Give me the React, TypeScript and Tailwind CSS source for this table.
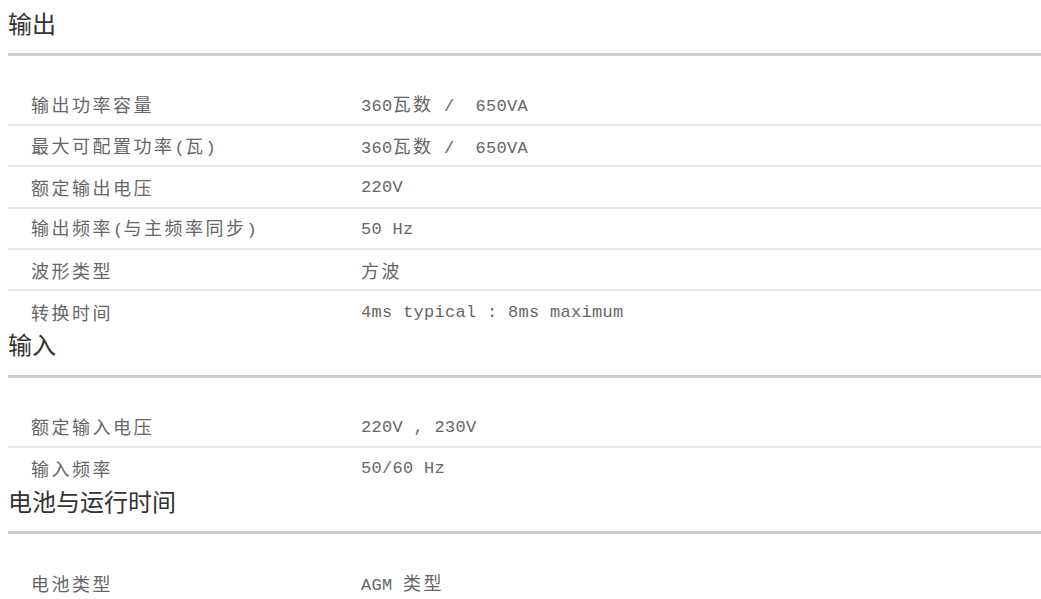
import React from "react"

type Row = { label: string; value: string }
type Section = { title: string; rows: Row[] }

const sections: Section[] = [
  {
    title: "输出",
    rows: [
      { label: "输出功率容量", value: "360瓦数 /  650VA" },
      { label: "最大可配置功率(瓦)", value: "360瓦数 /  650VA" },
      { label: "额定输出电压", value: "220V" },
      { label: "输出频率(与主频率同步)", value: "50 Hz" },
      { label: "波形类型", value: "方波" },
      { label: "转换时间", value: "4ms typical : 8ms maximum" },
    ],
  },
  {
    title: "输入",
    rows: [
      { label: "额定输入电压", value: "220V , 230V" },
      { label: "输入频率", value: "50/60 Hz" },
    ],
  },
  {
    title: "电池与运行时间",
    rows: [{ label: "电池类型", value: "AGM 类型" }],
  },
]

// split text into CJK / latin runs so each gets its own size
function Mixed({ text }: { text: string }) {
  const parts = text.match(/[\u4e00-\u9fff]+|[^\u4e00-\u9fff]+/g) || []
  return (
    <span className="whitespace-pre">
      {parts.map((p, i) =>
        /[\u4e00-\u9fff]/.test(p) ? (
          <span key={i} className="font-['Noto_Sans_CJK_SC',sans-serif] text-[18px] tracking-[2.5px]">
            {p}
          </span>
        ) : (
          <span key={i} className="font-['Liberation_Mono',monospace] text-[17px] tracking-[0.3px]">
            {p}
          </span>
        ),
      )}
    </span>
  )
}

export default function App() {
  return (
    <div className="min-h-screen bg-white pl-[8px] pt-[9.5px]">
      {sections.map((s) => (
        <div key={s.title}>
          <h3 className="border-b-[3px] border-[#cccccc] pb-[18px] font-['Noto_Sans_CJK_SC',sans-serif] text-[24px] leading-[25.5px] text-[#333333]">
            {s.title}
          </h3>
          <div className="mt-[28.5px]">
            {s.rows.map((r, i) => {
              const last = i === s.rows.length - 1
              return (
                <div
                  key={r.label}
                  className={
                    last
                      ? "flex h-[40px] items-center pt-[1.5px] text-[#666666]"
                      : "flex h-[41.4px] items-center border-b-2 border-[#e8e8e8] pt-[1.5px] text-[#666666]"
                  }
                >
                  <div className="w-[353px] shrink-0 pl-[23px]">
                    <Mixed text={r.label} />
                  </div>
                  <Mixed text={r.value} />
                </div>
              )
            })}
          </div>
        </div>
      ))}
    </div>
  )
}
